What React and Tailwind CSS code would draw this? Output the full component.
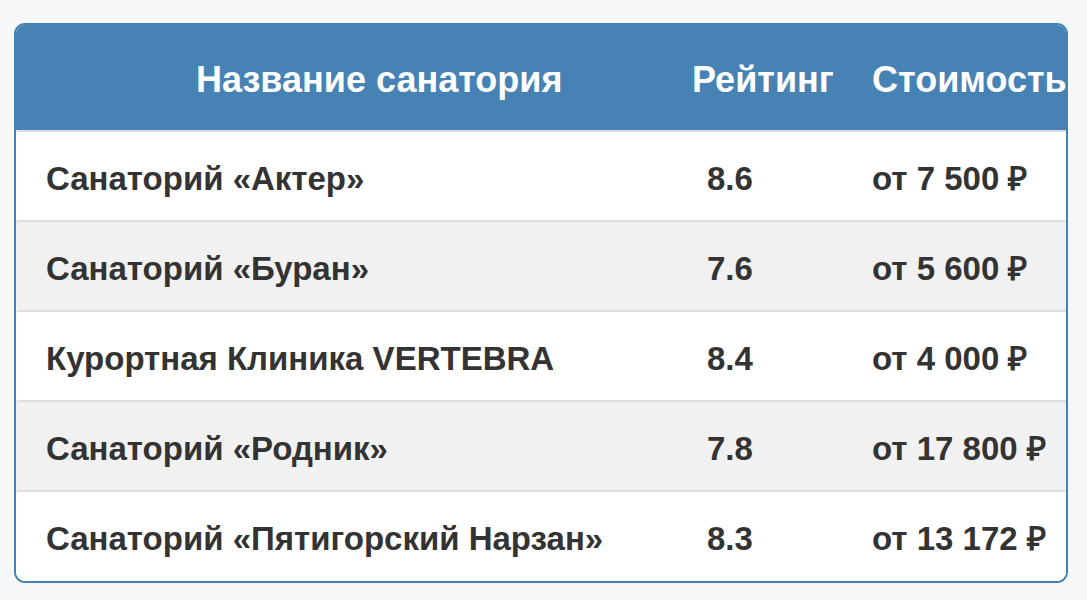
const rows = [
  { name: 'Санаторий «Актер»', rating: '8.6', price: 'от 7 500 ₽' },
  { name: 'Санаторий «Буран»', rating: '7.6', price: 'от 5 600 ₽' },
  { name: 'Курортная Клиника VERTEBRA', rating: '8.4', price: 'от 4 000 ₽' },
  { name: 'Санаторий «Родник»', rating: '7.8', price: 'от 17 800 ₽' },
  { name: 'Санаторий «Пятигорский Нарзан»', rating: '8.3', price: 'от 13 172 ₽' },
];

export default function App() {
  return (
    <div
      className="min-h-[600px] bg-[#f6f7f9] pt-[23px] pl-[14px]"
      style={{ fontFamily: '"Liberation Sans", Arial, sans-serif' }}
    >
      <div className="w-[1054px] border-2 border-[#4682b4] rounded-[11px] overflow-hidden bg-white">
        <div className="grid grid-cols-[661px_165px_1fr] h-[105px] items-center bg-[#4682b4] text-white text-[36px] leading-none font-bold whitespace-nowrap">
          <div className="pl-[180px] pt-[5px]">Название санатория</div>
          <div className="pl-[15px] pt-[5px]">Рейтинг</div>
          <div className="pl-[30px] pt-[5px]">Стоимость</div>
        </div>
        {rows.map((row, i) => (
          <div
            key={row.name}
            className={`grid grid-cols-[661px_165px_1fr] h-[90px] last:h-[91px] items-center border-t-2 border-[#dddddd] rounded-tl-[3px] text-[33px] leading-none font-bold text-[#333333] whitespace-nowrap ${
              i % 2 === 1 ? 'bg-[#f1f1f1]' : 'bg-white'
            }`}
          >
            <div className="pl-[30px] pt-[4px]">{row.name}</div>
            <div className="pl-[30px] pt-[4px]">{row.rating}</div>
            <div className="pl-[30px] pt-[4px]">{row.price}</div>
          </div>
        ))}
      </div>
    </div>
  );
}
